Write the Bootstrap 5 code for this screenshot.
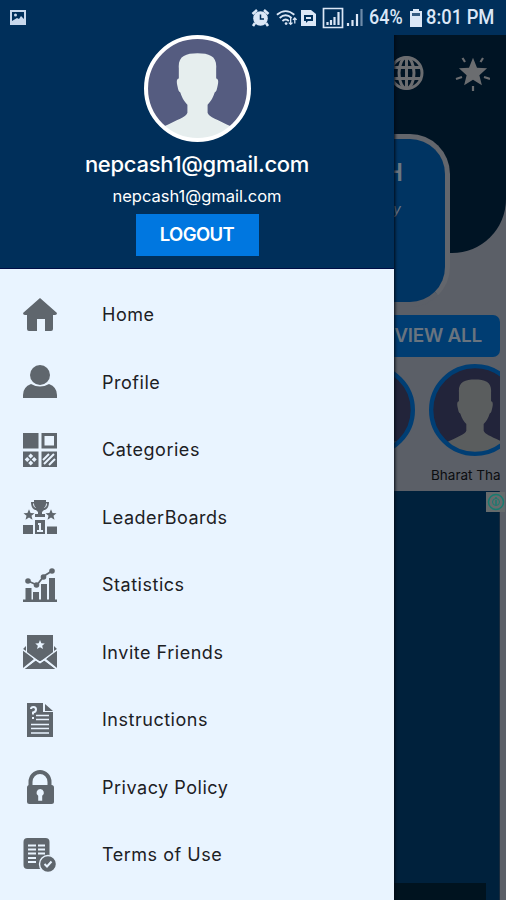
<!DOCTYPE html>
<html lang="en">
<head>
<meta charset="utf-8">
<meta name="viewport" content="width=device-width, initial-scale=1">
<title>NepCash</title>
<link href="https://cdn.jsdelivr.net/npm/bootstrap@5.3.0/dist/css/bootstrap.min.css" rel="stylesheet">
<style>
body{font-family:Inter,Roboto,sans-serif;background:#5b5f67}
.screen{width:506px;height:900px}
.statusbar{height:35px;background:#002f5a;padding:0 7px 0 9px;color:#dbe7f6;z-index:5}
.statusbar .txt{font:500 19.5px Roboto,sans-serif;white-space:pre;transform-origin:0 50%}
.pct{transform:scaleX(.92);width:37px;margin-left:5px}
.clock{transform:scaleX(.94);width:73px;margin-left:4px}
.hero{height:218px;background:#001424;border-bottom-right-radius:54px;color:#6b6d70}
.hero-icons{padding:18px 16px 0 0;gap:29px}
.promo{top:99px;left:60px;width:390px;height:173px;border:5px solid #63666c;border-radius:40px;background:#003462;color:#6b7783;border-bottom-color:#5b5f67;padding:18px 42px}
.promo .big{font-size:24px;line-height:32px;font-weight:600}
.promo .sub{font-size:14px;line-height:40px;font-style:italic;padding-right:2px}
.viewall{margin:62px 6px 0 0;width:140px;height:42px;border-radius:7px;background:#003d72;color:#69747f;font-size:19px;font-weight:600;letter-spacing:-.3px;padding-right:18px}
.people{height:134px;width:500px;padding:7px 0 0 323px;gap:14px}
.person{width:92px;flex:none}
.person svg{display:block}
.person span{font-size:13.5px;line-height:19px;margin-top:10px;color:#0b0d10;white-space:nowrap;padding-left:2px;display:block}
.advert{width:500px;height:409px;background:#00213c;border-right:1px solid #192b3d}
.advert-foot{width:486px;height:17px;background:#00131f}
.adinfo{right:1px;top:492px;width:19px;height:20px;background:#666b6c}
.drawer{width:394px;height:900px;background:#e9f4ff;box-shadow:0 0 3px 1px #000814}
.profile-head{height:269px;background:#002f5a;padding-top:35px;border-bottom:1px solid #000e45}
.uname{font-size:22px;line-height:28px;font-weight:500;margin-top:8px;letter-spacing:-.27px}
.umail{font-size:16.5px;line-height:22px;margin-top:7px;letter-spacing:0}
.logout{width:123px;height:42px;margin-top:7px;background:#0077e0;font-size:18.5px;font-weight:600;letter-spacing:-.6px}
.menu{padding-top:12px}
.menu a{height:67.5px;padding-left:23px;color:#1c2024;font-size:18px;letter-spacing:.52px;white-space:nowrap}
.menu svg{width:34px;height:34px;flex:none;margin-right:45px;color:#5f666d}
</style>
<script src="https://cdn.jsdelivr.net/npm/bootstrap@5.3.0/dist/js/bootstrap.bundle.min.js"></script>
</head>
<body>
<svg width="0" height="0" class="position-absolute">
<defs>
<clipPath id="disc"><circle cx="53" cy="53" r="50"/></clipPath>
<path id="bust" d="M34.500 33C33.500 21 41 18 53 18s19.500 3 18.500 15c0 4 0 7 0 10 2 0 2.500 3 1.500 7-1 4-1 6-3 7-2 6-4 9-7 12v8c1 4 10 7 24 14 7 4 8 17 8 17H11s1-13 8-17c14-7 23-10 24-14v-8c-3-3-5-6-7-12-2-1-2-3-3-7-1-4-.5-7 1.500-7 0-3 0-6 0-10z"/>
<path id="star" d="M0-10 2.7-3.4 9.5-3.1 4.3 1.4 6 8.1 0 4.4-6 8.1-4.3 1.4-9.5-3.1-2.7-3.4z"/>
</defs>
</svg>
<div class="screen position-relative overflow-hidden">
  <header class="statusbar d-flex align-items-center position-relative">
    <svg width="18" height="18" viewBox="0 0 18 18" class="me-auto"><rect x="1" y="1" width="16" height="15" fill="#c8d8ec"/><path fill="#002f5a" d="M3 3h12v7l-3-3-2 3-2-1-5 3z"/><circle cx="6.500" cy="6" r="1.500" fill="#c8d8ec"/></svg>
    <svg width="19" height="20" viewBox="0 0 19 20" fill="none" stroke="currentColor"><circle cx="9.500" cy="10.500" r="7.300" fill="currentColor" stroke="none"/><path d="M1.500 6 6 2M17.500 6 13 2M4 15l-2 3M15 15l2 3" stroke-width="2.600"/><path d="M9.500 6.500V11H13" stroke="#002f5a" stroke-width="1.500"/></svg>
    <svg width="22" height="20" viewBox="0 0 24 20" fill="none" stroke="currentColor" stroke-width="2" style="margin-left:6px"><path d="M1 6.500Q10.500-1.500 20 6.500M4 10Q10.500 4 17 10M7 13.300Q10.500 10 14 13.300"/><circle cx="11" cy="16" r="1.500" fill="currentColor" stroke="none"/><path d="M16 10v7m-2-2 2 2 2-2M20.500 16V10m-2 2 2-2 2 2" stroke-width="1.400"/></svg>
    <svg width="15" height="18" viewBox="0 0 15 18" style="margin-left:3px"><path fill="currentColor" d="M0 1h10l5 4v12H0z"/><path fill="#002f5a" d="M3 6h9v6H7l-2 2v-2H3z"/><path fill="currentColor" d="M5 8h5v2H5z"/></svg>
    <svg width="22" height="22" viewBox="0 0 22 22" fill="none" stroke="currentColor" style="margin-left:6px" stroke-width="1.700"><path d="M1.500 1.500h19v19h-19z"/><path d="M5.500 18v-3M9 18v-5M12.500 18v-8M16.500 18V5" stroke-width="2.200"/></svg>
    <svg width="18" height="20" viewBox="0 0 18 20" stroke="currentColor" stroke-width="2.200" style="margin-left:2px"><path d="M2 18v-3M6.500 18v-6M11 18V6"/><path d="M15.500 18V1" opacity=".5"/></svg>
    <span class="txt pct">64%</span>
    <svg width="12" height="20" viewBox="0 0 12 20" class="ms-1"><path fill="currentColor" d="M3 1h6v2h3v16H0V3h3z"/><path fill="#345a80" d="M2 5h8v3H2z"/></svg>
    <span class="txt clock">8:01 PM</span>
  </header>

  <main>
    <section class="hero position-relative">
      <div class="hero-icons d-flex justify-content-end">
        <svg width="37" height="38" viewBox="0 0 37 38" fill="none" stroke="currentColor" stroke-width="3"><circle cx="18.500" cy="20" r="15.500"/><ellipse cx="18.500" cy="20" rx="7.500" ry="15.500"/><path d="M18.500 5v30M5 14.500h27M5 25.500h27"/></svg>
        <svg width="36" height="38" viewBox="0 0 36 38" fill="currentColor"><use href="#star" transform="translate(19 20) scale(1.480 1.520)"/><path d="M8.500 5 11 9M29 5l-2.500 4M2 26l6-2M36 26l-6-2M19 33v5" stroke="currentColor" stroke-width="2.200"/></svg>
      </div>
      <div class="promo position-absolute text-end">
        <div class="big">CASH</div>
        <div class="sub">Daily</div>
      </div>
    </section>
    <div class="viewall ms-auto d-flex align-items-center justify-content-end text-nowrap">VIEW ALL</div>
    <section class="people d-flex overflow-hidden">
      <div class="person"><svg width="92" height="92" viewBox="0 0 106 106"><circle cx="53" cy="53" r="51" fill="#22243a"/><use href="#bust" fill="#5a5d5e" clip-path="url(#disc)"/><circle cx="53" cy="53" r="50.500" fill="none" stroke="#003e74" stroke-width="5"/></svg></div>
      <div class="person"><svg width="92" height="92" viewBox="0 0 106 106"><circle cx="53" cy="53" r="51" fill="#22243a"/><use href="#bust" fill="#5a5d5e" clip-path="url(#disc)"/><circle cx="53" cy="53" r="50.500" fill="none" stroke="#003e74" stroke-width="5"/></svg><span>Bharat Tha</span></div>
    </section>
    <section class="advert d-flex align-items-end"><div class="advert-foot"></div></section>
  </main>
  <div class="adinfo position-absolute d-flex align-items-center justify-content-center"><svg width="18" height="18" viewBox="0 0 18 18" fill="none" stroke="#187b70" stroke-width="1.500"><circle cx="9" cy="9" r="7.500"/><circle cx="9" cy="9" r="3.500" stroke-width="1"/><path d="M9 7v5M9 4v1.500"/></svg></div>

  <aside class="drawer position-absolute top-0 start-0">
    <div class="profile-head d-flex flex-column align-items-center text-white">
      <svg width="107" height="107" viewBox="0 0 106 106" class="flex-shrink-0"><circle cx="53" cy="53" r="51" fill="#555c80"/><use href="#bust" fill="#e6eeee" clip-path="url(#disc)"/><circle cx="53" cy="53" r="51" fill="none" stroke="#fff" stroke-width="4"/></svg>
      <div class="uname">nepcash1@gmail.com</div>
      <div class="umail">nepcash1@gmail.com</div>
      <button class="logout btn rounded-0 border-0 text-white p-0">LOGOUT</button>
    </div>
    <nav class="menu d-flex flex-column">
      <a class="d-flex align-items-center text-decoration-none"><svg viewBox="0 0 34 34" fill="currentColor"><path d="M17 0 34 15q0 2-2 2h-2v14q0 2-2 2h-6V21h-8v12H6q-2 0-2-2V17H2q-2 0-2-2z"/></svg><span>Home</span></a>
      <a class="d-flex align-items-center text-decoration-none"><svg viewBox="0 0 34 34" fill="currentColor"><circle cx="17" cy="10" r="10"/><path d="M8 19q9 5 18 0 8 3 8 11v3H0v-3q0-8 8-11z"/></svg><span>Profile</span></a>
      <a class="d-flex align-items-center text-decoration-none"><svg viewBox="0 0 34 34" fill="currentColor"><path fill-rule="evenodd" d="M0 0h15.500v15.500H0zM18.500 0H34v15.500H18.500zM21.500 3v9.500H31V3z"/><path d="M0 18.500h15.500V34H0zM18.500 18.500H34V34H18.500z"/><path fill="#e9f4ff" d="m7.700 20.500 2.500 2.500-2.500 2.500L5.200 23zM7.700 27.500l2.500 2.500-2.500 2.500L5.200 30zM4.200 24l2.500 2.500L4.200 29l-2.500-2.500zM11.200 24l2.500 2.500-2.500 2.500-2.500-2.500z"/><path stroke="#e9f4ff" stroke-width="2" d="m20 27 6-6M21 31l10-10M26 32l6-6"/></svg><span>Categories</span></a>
      <a class="d-flex align-items-center text-decoration-none"><svg viewBox="0 0 34 34" fill="currentColor"><path d="M11 0h12v2h3c0 6-3 8-5 8l-2 2v2h3v3H12v-3h3v-2l-2-2c-2 0-5-2-5-8h3z"/><path stroke="#e9f4ff" d="M10.500 3.500c0 2 1 4 2 4M23.500 3.500c0 2-1 4-2 4" fill="none"/><use href="#star" transform="translate(6 15) scale(.58)"/><use href="#star" transform="translate(28 15) scale(.58)"/><path d="M0 25h10v9H0zM12 20h10v14H12zM24 26.500h10V34H24z"/><path fill="none" stroke="#e9f4ff" stroke-width="2" d="M15 24h2v7M14 31h6"/></svg><span>LeaderBoards</span></a>
      <a class="d-flex align-items-center text-decoration-none"><svg viewBox="0 0 34 34" fill="currentColor"><path d="M2.500 20h6v12h-6zM10 24h6v8h-6zM18 16h6v16h-6zM26 10h6v22h-6zM0 31.500h34V34H0z"/><path fill="none" stroke="currentColor" stroke-width="1.800" d="m5 13 9 4 7-9 8-5"/><circle cx="5" cy="13" r="2.800"/><circle cx="13.500" cy="17" r="2.800"/><circle cx="20.500" cy="9" r="2.800"/><circle cx="29" cy="3" r="2.800"/></svg><span>Statistics</span></a>
      <a class="d-flex align-items-center text-decoration-none"><svg viewBox="0 0 34 34" fill="currentColor"><path d="M4 0h26v19L18 26h-2L4 19zM3 11v5L0 14zM31 11v5l3-2z"/><path d="m0 15 11 9L0 33zM34 15l-11 9 11 9zM1.500 34l11-8.500 4.500 3 4.500-3 11 8.500z"/><path fill="none" stroke="#e9f4ff" stroke-width="1.400" d="m0 15 17 12.500L34 15M1 33.500l12-9M33 33.500l-12-9"/><use href="#star" transform="translate(17 10) scale(.5)" fill="#e9f4ff"/></svg><span>Invite Friends</span></a>
      <a class="d-flex align-items-center text-decoration-none"><svg viewBox="0 0 34 34" fill="currentColor"><path d="M4 0h16v9h10v25H4zM22 1l8 7h-8z"/><g fill="none" stroke="#e9f4ff" stroke-width="1.500"><path d="M13 12.500h13M13 16.500h13M8 21.500h18M8 25.500h18M8 30h18"/><path stroke-width="2" d="M8 6q0-2 2.500-2T13 6.500 10 9.500v2M10 14v2"/></g></svg><span>Instructions</span></a>
      <a class="d-flex align-items-center text-decoration-none"><svg viewBox="0 0 34 34" fill="currentColor"><path fill="none" stroke="currentColor" stroke-width="4" d="M7.500 16v-4a9.500 10 0 0 1 19 0v4"/><rect x="4" y="15" width="27" height="19" rx="2.500"/><path fill="#e9f4ff" d="M17.200 19a3.700 3.700 0 0 1 2 6.800v5h-4v-5a3.700 3.700 0 0 1 2-6.800z"/></svg><span>Privacy Policy</span></a>
      <a class="d-flex align-items-center text-decoration-none"><svg viewBox="0 0 34 34" fill="currentColor"><rect x=".5" width="26" height="31" rx="4"/><path fill="none" stroke="#e9f4ff" stroke-width="1.800" d="M5 7.500h8M15 7.500h7M5 11.500h8M15 11.500h7M5 15.500h8M15 15.500h7M5 20h8M5 24h8"/><circle cx="25" cy="26" r="8.500" stroke="#e9f4ff" stroke-width="1.400"/><path fill="none" stroke="#e9f4ff" stroke-width="2" d="m21.500 26 2.500 2.500 4.500-5"/></svg><span>Terms of Use</span></a>
    </nav>
  </aside>
</div>
</body>
</html>
